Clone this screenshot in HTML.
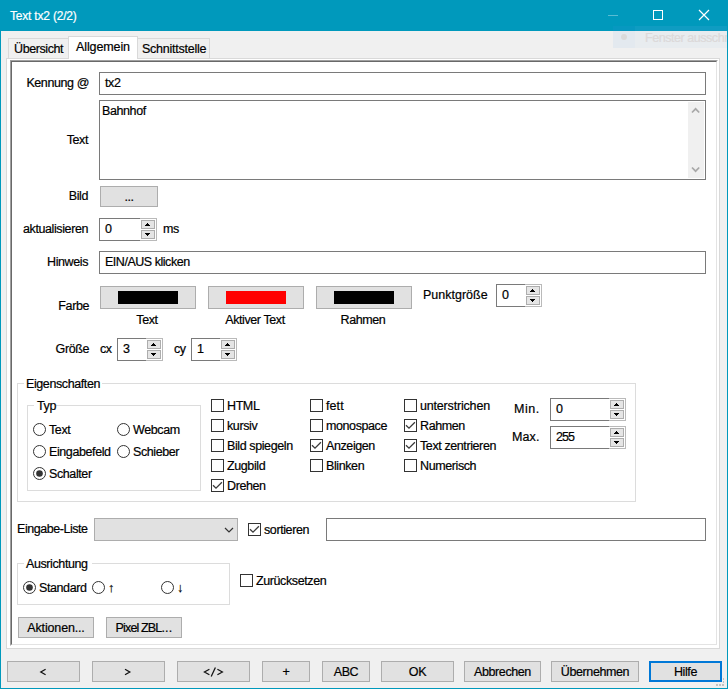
<!DOCTYPE html>
<html><head><meta charset="utf-8"><style>
html,body{margin:0;padding:0;}
body{width:728px;height:689px;position:relative;overflow:hidden;background:#f0f0f0;font-family:"Liberation Sans",sans-serif;}
.a{position:absolute;}
.t{position:absolute;white-space:nowrap;font-size:12.5px;line-height:12px;color:#000;letter-spacing:-0.4px;-webkit-text-stroke:0.2px currentColor;}
svg.a{display:block;}
</style></head><body>
<div class="a" style="left:0px;top:0px;width:728px;height:31px;background:#0099bc;"></div>
<div class="a" style="left:0px;top:0px;width:1px;height:689px;background:#0099bc;"></div>
<div class="a" style="left:727px;top:0px;width:1px;height:689px;background:#0099bc;"></div>
<div class="a" style="left:0px;top:688px;width:728px;height:1px;background:#0099bc;"></div>
<div class="t" style="left:10px;top:10px;color:#fff;font-size:12px;letter-spacing:-0.2px">Text tx2 (2/2)</div>
<div class="a" style="left:608px;top:15px;width:10px;height:1px;background:rgba(255,255,255,0.35);"></div>
<div class="a" style="left:653px;top:10px;width:10px;height:10px;box-sizing:border-box;border:1px solid #fff;"></div>
<svg class="a" style="left:698px;top:9px" width="13" height="13"><path d="M1 1L11 11M11 1L1 11" stroke="#fff" stroke-width="1.2"/></svg>
<div class="a" style="left:8px;top:38px;width:61px;height:21px;box-sizing:border-box;border:1px solid #d9d9d9;background:#f0f0f0;"></div>
<div class="a" style="left:137px;top:38px;width:73px;height:21px;box-sizing:border-box;border:1px solid #d9d9d9;background:#f0f0f0;"></div>
<div class="a" style="left:6px;top:58px;width:714px;height:591px;box-sizing:border-box;border:1px solid #d9d9d9;background:#fff;"></div>
<div class="a" style="left:68px;top:36px;width:70px;height:23px;box-sizing:border-box;border:1px solid #d9d9d9;background:#fff;border-bottom:0"></div>
<div class="t" style="left:14px;top:43px;">Übersicht</div>
<div class="t" style="left:76px;top:41px;letter-spacing:-0.11px">Allgemein</div>
<div class="t" style="left:142px;top:43px;letter-spacing:-0.24px">Schnittstelle</div>
<div class="a" style="left:10px;top:60px;width:708px;height:586px;background:#fff;"></div>
<div class="a" style="left:10px;top:60px;width:708px;height:586px;box-sizing:border-box;border-top:1px solid #a0a0a0;border-left:1px solid #a0a0a0;border-right:1px solid #fff;border-bottom:1px solid #fff"></div>
<div class="a" style="left:11px;top:61px;width:706px;height:584px;box-sizing:border-box;border-top:1px solid #696969;border-left:1px solid #696969;border-right:1px solid #e3e3e3;border-bottom:1px solid #e3e3e3"></div>
<div class="t" style="right:639px;top:77px;">Kennung @</div>
<div class="a" style="left:99px;top:72px;width:607px;height:23px;box-sizing:border-box;border:1px solid #7a7a7a;background:#fff;"></div>
<div class="t" style="left:105px;top:77px;">tx2</div>
<div class="a" style="left:99px;top:100px;width:607px;height:80px;box-sizing:border-box;border:1px solid #7a7a7a;background:#fff;"></div>
<div class="a" style="left:688px;top:102px;width:16px;height:76px;background:#f0f0f0;"></div>
<svg class="a" style="left:688px;top:102px" width="16" height="76"><path d="M4 10.5L7.6 6.8L11.2 10.5M4 65.5L7.6 69.2L11.2 65.5" stroke="#a8a8a8" stroke-width="1.7" fill="none"/></svg>
<div class="t" style="left:102px;top:105px;">Bahnhof</div>
<div class="t" style="right:640px;top:134px;">Text</div>
<div class="t" style="right:640px;top:190px;">Bild</div>
<div class="a" style="left:100px;top:186px;width:58px;height:21px;box-sizing:border-box;border:1px solid #adadad;background:#e1e1e1;"></div>
<div class="t" style="left:100px;width:58px;text-align:center;top:191px;">...</div>
<div class="t" style="right:640px;top:223px;">aktualisieren</div>
<div class="a" style="left:99px;top:218px;width:41px;height:23px;box-sizing:border-box;border:1px solid #7a7a7a;border-right:0;background:#fff"></div>
<div class="a" style="left:140px;top:218px;width:17px;height:23px;box-sizing:border-box;border:1px solid #bababa;border-left:0;background:#fff"></div>
<div class="a" style="left:141px;top:220px;width:14px;height:9px;box-sizing:border-box;border:1px solid #adadad;background:#e5e5e5;"></div>
<div class="a" style="left:141px;top:230px;width:14px;height:9px;box-sizing:border-box;border:1px solid #adadad;background:#e5e5e5;"></div>
<svg class="a" style="left:141px;top:220px" width="14" height="9" shape-rendering="crispEdges"><path d="M6 3h1v1h1v1h1v1h-5v-1h1v-1h1z" fill="#000"/></svg>
<svg class="a" style="left:141px;top:230px" width="14" height="9" shape-rendering="crispEdges"><path d="M4 3h5v1h-1v1h-1v1h-1v-1h-1v-1h-1z" fill="#000"/></svg>
<div class="t" style="left:105px;top:223px;letter-spacing:-1px">0</div>
<div class="t" style="left:163px;top:223px;">ms</div>
<div class="t" style="right:640px;top:256px;">Hinweis</div>
<div class="a" style="left:99px;top:251px;width:607px;height:23px;box-sizing:border-box;border:1px solid #7a7a7a;background:#fff;"></div>
<div class="t" style="left:105px;top:256px;"><span style='letter-spacing:-0.47px'>EIN/AUS klicken</span></div>
<div class="t" style="right:639px;top:300px;">Farbe</div>
<div class="a" style="left:100px;top:286px;width:96px;height:23px;box-sizing:border-box;border:1px solid #adadad;background:#e1e1e1;"></div>
<div class="a" style="left:118px;top:291px;width:60px;height:13px;background:#000;"></div>
<div class="t" style="left:99px;width:96px;text-align:center;top:314px;">Text</div>
<div class="a" style="left:208px;top:286px;width:96px;height:23px;box-sizing:border-box;border:1px solid #adadad;background:#e1e1e1;"></div>
<div class="a" style="left:226px;top:291px;width:60px;height:13px;background:#f00;"></div>
<div class="t" style="left:207px;width:96px;text-align:center;top:314px;">Aktiver Text</div>
<div class="a" style="left:316px;top:286px;width:96px;height:23px;box-sizing:border-box;border:1px solid #adadad;background:#e1e1e1;"></div>
<div class="a" style="left:334px;top:291px;width:60px;height:13px;background:#000;"></div>
<div class="t" style="left:315px;width:96px;text-align:center;top:314px;">Rahmen</div>
<div class="t" style="left:423px;top:289px;letter-spacing:0px">Punktgröße</div>
<div class="a" style="left:496px;top:284px;width:29px;height:23px;box-sizing:border-box;border:1px solid #7a7a7a;border-right:0;background:#fff"></div>
<div class="a" style="left:525px;top:284px;width:17px;height:23px;box-sizing:border-box;border:1px solid #bababa;border-left:0;background:#fff"></div>
<div class="a" style="left:526px;top:286px;width:14px;height:9px;box-sizing:border-box;border:1px solid #adadad;background:#e5e5e5;"></div>
<div class="a" style="left:526px;top:296px;width:14px;height:9px;box-sizing:border-box;border:1px solid #adadad;background:#e5e5e5;"></div>
<svg class="a" style="left:526px;top:286px" width="14" height="9" shape-rendering="crispEdges"><path d="M6 3h1v1h1v1h1v1h-5v-1h1v-1h1z" fill="#000"/></svg>
<svg class="a" style="left:526px;top:296px" width="14" height="9" shape-rendering="crispEdges"><path d="M4 3h5v1h-1v1h-1v1h-1v-1h-1v-1h-1z" fill="#000"/></svg>
<div class="t" style="left:502px;top:289px;letter-spacing:-1px">0</div>
<div class="t" style="right:639px;top:343px;">Größe</div>
<div class="t" style="left:100px;top:343px;">cx</div>
<div class="a" style="left:117px;top:338px;width:29px;height:23px;box-sizing:border-box;border:1px solid #7a7a7a;border-right:0;background:#fff"></div>
<div class="a" style="left:146px;top:338px;width:17px;height:23px;box-sizing:border-box;border:1px solid #bababa;border-left:0;background:#fff"></div>
<div class="a" style="left:147px;top:340px;width:14px;height:9px;box-sizing:border-box;border:1px solid #adadad;background:#e5e5e5;"></div>
<div class="a" style="left:147px;top:350px;width:14px;height:9px;box-sizing:border-box;border:1px solid #adadad;background:#e5e5e5;"></div>
<svg class="a" style="left:147px;top:340px" width="14" height="9" shape-rendering="crispEdges"><path d="M6 3h1v1h1v1h1v1h-5v-1h1v-1h1z" fill="#000"/></svg>
<svg class="a" style="left:147px;top:350px" width="14" height="9" shape-rendering="crispEdges"><path d="M4 3h5v1h-1v1h-1v1h-1v-1h-1v-1h-1z" fill="#000"/></svg>
<div class="t" style="left:123px;top:343px;letter-spacing:-1px">3</div>
<div class="t" style="left:174px;top:343px;">cy</div>
<div class="a" style="left:191px;top:338px;width:29px;height:23px;box-sizing:border-box;border:1px solid #7a7a7a;border-right:0;background:#fff"></div>
<div class="a" style="left:220px;top:338px;width:17px;height:23px;box-sizing:border-box;border:1px solid #bababa;border-left:0;background:#fff"></div>
<div class="a" style="left:221px;top:340px;width:14px;height:9px;box-sizing:border-box;border:1px solid #adadad;background:#e5e5e5;"></div>
<div class="a" style="left:221px;top:350px;width:14px;height:9px;box-sizing:border-box;border:1px solid #adadad;background:#e5e5e5;"></div>
<svg class="a" style="left:221px;top:340px" width="14" height="9" shape-rendering="crispEdges"><path d="M6 3h1v1h1v1h1v1h-5v-1h1v-1h1z" fill="#000"/></svg>
<svg class="a" style="left:221px;top:350px" width="14" height="9" shape-rendering="crispEdges"><path d="M4 3h5v1h-1v1h-1v1h-1v-1h-1v-1h-1z" fill="#000"/></svg>
<div class="t" style="left:197px;top:343px;letter-spacing:-1px">1</div>
<div class="a" style="left:17px;top:383px;width:619px;height:119px;box-sizing:border-box;border:1px solid #dcdcdc"></div>
<div class="a" style="left:24px;top:377px;width:78px;height:12px;background:#fff"></div>
<div class="t" style="left:26px;top:378px;">Eigenschaften</div>
<div class="a" style="left:27px;top:405px;width:174px;height:86px;box-sizing:border-box;border:1px solid #dcdcdc"></div>
<div class="a" style="left:34px;top:399px;width:22px;height:12px;background:#fff"></div>
<div class="t" style="left:37px;top:400px;">Typ</div>
<svg class="a" style="left:33px;top:423px" width="13" height="13"><circle cx="6.5" cy="6.5" r="6" stroke="#333" stroke-width="1" fill="#fff"/></svg>
<div class="t" style="left:49px;top:424px;">Text</div>
<svg class="a" style="left:117px;top:423px" width="13" height="13"><circle cx="6.5" cy="6.5" r="6" stroke="#333" stroke-width="1" fill="#fff"/></svg>
<div class="t" style="left:133px;top:424px;">Webcam</div>
<svg class="a" style="left:33px;top:445px" width="13" height="13"><circle cx="6.5" cy="6.5" r="6" stroke="#333" stroke-width="1" fill="#fff"/></svg>
<div class="t" style="left:49px;top:446px;">Eingabefeld</div>
<svg class="a" style="left:117px;top:445px" width="13" height="13"><circle cx="6.5" cy="6.5" r="6" stroke="#333" stroke-width="1" fill="#fff"/></svg>
<div class="t" style="left:133px;top:446px;">Schieber</div>
<svg class="a" style="left:33px;top:467px" width="13" height="13"><circle cx="6.5" cy="6.5" r="6" stroke="#333" stroke-width="1" fill="#fff"/><circle cx="6.5" cy="6.5" r="3.3" fill="#333"/></svg>
<div class="t" style="left:49px;top:468px;">Schalter</div>
<div class="a" style="left:211px;top:399px;width:13px;height:13px;box-sizing:border-box;border:1px solid #333;background:#fff;"></div>
<div class="t" style="left:227px;top:400px;">HTML</div>
<div class="a" style="left:211px;top:419px;width:13px;height:13px;box-sizing:border-box;border:1px solid #333;background:#fff;"></div>
<div class="t" style="left:227px;top:420px;">kursiv</div>
<div class="a" style="left:211px;top:439px;width:13px;height:13px;box-sizing:border-box;border:1px solid #333;background:#fff;"></div>
<div class="t" style="left:227px;top:440px;">Bild spiegeln</div>
<div class="a" style="left:211px;top:459px;width:13px;height:13px;box-sizing:border-box;border:1px solid #333;background:#fff;"></div>
<div class="t" style="left:227px;top:460px;">Zugbild</div>
<div class="a" style="left:211px;top:479px;width:13px;height:13px;box-sizing:border-box;border:1px solid #333;background:#fff;"></div>
<svg class="a" style="left:211px;top:479px" width="13" height="13"><path d="M2 6.2L5 9.2L10.9 3.3" stroke="#3a3a3a" stroke-width="1.3" fill="none"/></svg>
<div class="t" style="left:227px;top:480px;">Drehen</div>
<div class="a" style="left:310px;top:399px;width:13px;height:13px;box-sizing:border-box;border:1px solid #333;background:#fff;"></div>
<div class="t" style="left:326px;top:400px;"><span style='letter-spacing:0.1px'>fett</span></div>
<div class="a" style="left:310px;top:419px;width:13px;height:13px;box-sizing:border-box;border:1px solid #333;background:#fff;"></div>
<div class="t" style="left:326px;top:420px;">monospace</div>
<div class="a" style="left:310px;top:439px;width:13px;height:13px;box-sizing:border-box;border:1px solid #333;background:#fff;"></div>
<svg class="a" style="left:310px;top:439px" width="13" height="13"><path d="M2 6.2L5 9.2L10.9 3.3" stroke="#3a3a3a" stroke-width="1.3" fill="none"/></svg>
<div class="t" style="left:326px;top:440px;">Anzeigen</div>
<div class="a" style="left:310px;top:459px;width:13px;height:13px;box-sizing:border-box;border:1px solid #333;background:#fff;"></div>
<div class="t" style="left:326px;top:460px;">Blinken</div>
<div class="a" style="left:404px;top:399px;width:13px;height:13px;box-sizing:border-box;border:1px solid #333;background:#fff;"></div>
<div class="t" style="left:420px;top:400px;"><span style='letter-spacing:-0.18px'>unterstrichen</span></div>
<div class="a" style="left:404px;top:419px;width:13px;height:13px;box-sizing:border-box;border:1px solid #333;background:#fff;"></div>
<svg class="a" style="left:404px;top:419px" width="13" height="13"><path d="M2 6.2L5 9.2L10.9 3.3" stroke="#3a3a3a" stroke-width="1.3" fill="none"/></svg>
<div class="t" style="left:420px;top:420px;">Rahmen</div>
<div class="a" style="left:404px;top:439px;width:13px;height:13px;box-sizing:border-box;border:1px solid #333;background:#fff;"></div>
<svg class="a" style="left:404px;top:439px" width="13" height="13"><path d="M2 6.2L5 9.2L10.9 3.3" stroke="#3a3a3a" stroke-width="1.3" fill="none"/></svg>
<div class="t" style="left:420px;top:440px;">Text zentrieren</div>
<div class="a" style="left:404px;top:459px;width:13px;height:13px;box-sizing:border-box;border:1px solid #333;background:#fff;"></div>
<div class="t" style="left:420px;top:460px;">Numerisch</div>
<div class="t" style="left:514px;top:403px;letter-spacing:0.5px">Min.</div>
<div class="a" style="left:550px;top:398px;width:59px;height:23px;box-sizing:border-box;border:1px solid #7a7a7a;border-right:0;background:#fff"></div>
<div class="a" style="left:609px;top:398px;width:17px;height:23px;box-sizing:border-box;border:1px solid #bababa;border-left:0;background:#fff"></div>
<div class="a" style="left:610px;top:400px;width:14px;height:9px;box-sizing:border-box;border:1px solid #adadad;background:#e5e5e5;"></div>
<div class="a" style="left:610px;top:410px;width:14px;height:9px;box-sizing:border-box;border:1px solid #adadad;background:#e5e5e5;"></div>
<svg class="a" style="left:610px;top:400px" width="14" height="9" shape-rendering="crispEdges"><path d="M6 3h1v1h1v1h1v1h-5v-1h1v-1h1z" fill="#000"/></svg>
<svg class="a" style="left:610px;top:410px" width="14" height="9" shape-rendering="crispEdges"><path d="M4 3h5v1h-1v1h-1v1h-1v-1h-1v-1h-1z" fill="#000"/></svg>
<div class="t" style="left:556px;top:403px;letter-spacing:-1px">0</div>
<div class="t" style="left:512px;top:431px;letter-spacing:0.1px">Max.</div>
<div class="a" style="left:550px;top:426px;width:59px;height:23px;box-sizing:border-box;border:1px solid #7a7a7a;border-right:0;background:#fff"></div>
<div class="a" style="left:609px;top:426px;width:17px;height:23px;box-sizing:border-box;border:1px solid #bababa;border-left:0;background:#fff"></div>
<div class="a" style="left:610px;top:428px;width:14px;height:9px;box-sizing:border-box;border:1px solid #adadad;background:#e5e5e5;"></div>
<div class="a" style="left:610px;top:438px;width:14px;height:9px;box-sizing:border-box;border:1px solid #adadad;background:#e5e5e5;"></div>
<svg class="a" style="left:610px;top:428px" width="14" height="9" shape-rendering="crispEdges"><path d="M6 3h1v1h1v1h1v1h-5v-1h1v-1h1z" fill="#000"/></svg>
<svg class="a" style="left:610px;top:438px" width="14" height="9" shape-rendering="crispEdges"><path d="M4 3h5v1h-1v1h-1v1h-1v-1h-1v-1h-1z" fill="#000"/></svg>
<div class="t" style="left:556px;top:431px;letter-spacing:-1px">255</div>
<div class="t" style="left:17px;top:523px;letter-spacing:-0.45px">Eingabe-Liste</div>
<div class="a" style="left:94px;top:518px;width:144px;height:23px;box-sizing:border-box;border:1px solid #adadad;background:#e1e1e1;"></div>
<svg class="a" style="left:220px;top:522px" width="16" height="14"><path d="M5 6L9 10L13 6" stroke="#333" stroke-width="1.2" fill="none"/></svg>
<div class="a" style="left:248px;top:523px;width:13px;height:13px;box-sizing:border-box;border:1px solid #333;background:#fff;"></div>
<svg class="a" style="left:248px;top:523px" width="13" height="13"><path d="M2 6.2L5 9.2L10.9 3.3" stroke="#3a3a3a" stroke-width="1.3" fill="none"/></svg>
<div class="t" style="left:264px;top:524px;">sortieren</div>
<div class="a" style="left:326px;top:518px;width:380px;height:23px;box-sizing:border-box;border:1px solid #7a7a7a;background:#fff;"></div>
<div class="a" style="left:17px;top:563px;width:213px;height:42px;box-sizing:border-box;border:1px solid #dcdcdc"></div>
<div class="a" style="left:24px;top:557px;width:68px;height:12px;background:#fff"></div>
<div class="t" style="left:26px;top:558px;">Ausrichtung</div>
<svg class="a" style="left:23px;top:581px" width="13" height="13"><circle cx="6.5" cy="6.5" r="6" stroke="#333" stroke-width="1" fill="#fff"/><circle cx="6.5" cy="6.5" r="3.3" fill="#333"/></svg>
<div class="t" style="left:39px;top:582px;">Standard</div>
<svg class="a" style="left:92px;top:581px" width="13" height="13"><circle cx="6.5" cy="6.5" r="6" stroke="#333" stroke-width="1" fill="#fff"/></svg>
<div class="t" style="left:108px;top:582px;">↑</div>
<svg class="a" style="left:161px;top:581px" width="13" height="13"><circle cx="6.5" cy="6.5" r="6" stroke="#333" stroke-width="1" fill="#fff"/></svg>
<div class="t" style="left:177px;top:582px;">↓</div>
<div class="a" style="left:240px;top:574px;width:13px;height:13px;box-sizing:border-box;border:1px solid #333;background:#fff;"></div>
<div class="t" style="left:256px;top:575px;">Zurücksetzen</div>
<div class="a" style="left:18px;top:617px;width:76px;height:21px;box-sizing:border-box;border:1px solid #adadad;background:#e1e1e1;"></div>
<div class="t" style="left:18px;width:76px;text-align:center;top:622px;letter-spacing:-0.16px">Aktionen...</div>
<div class="a" style="left:106px;top:617px;width:76px;height:21px;box-sizing:border-box;border:1px solid #adadad;background:#e1e1e1;"></div>
<div class="t" style="left:106px;width:76px;text-align:center;top:622px;"><span style='letter-spacing:-0.85px'>Pixel ZBL</span><span style='letter-spacing:0.2px'>...</span></div>
<div class="a" style="left:7px;top:661px;width:73px;height:21px;box-sizing:border-box;border:1px solid #adadad;background:#e1e1e1;"></div>
<div class="t" style="left:7px;width:73px;text-align:center;top:666px;"></div>
<div class="a" style="left:92px;top:661px;width:73px;height:21px;box-sizing:border-box;border:1px solid #adadad;background:#e1e1e1;"></div>
<div class="t" style="left:92px;width:73px;text-align:center;top:666px;"></div>
<div class="a" style="left:177px;top:661px;width:73px;height:21px;box-sizing:border-box;border:1px solid #adadad;background:#e1e1e1;"></div>
<div class="t" style="left:177px;width:73px;text-align:center;top:666px;"></div>
<div class="a" style="left:262px;top:661px;width:48px;height:21px;box-sizing:border-box;border:1px solid #adadad;background:#e1e1e1;"></div>
<div class="t" style="left:262px;width:48px;text-align:center;top:666px;">+</div>
<div class="a" style="left:322px;top:661px;width:48px;height:21px;box-sizing:border-box;border:1px solid #adadad;background:#e1e1e1;"></div>
<div class="t" style="left:322px;width:48px;text-align:center;top:666px;">ABC</div>
<div class="a" style="left:381px;top:661px;width:73px;height:21px;box-sizing:border-box;border:1px solid #adadad;background:#e1e1e1;"></div>
<div class="t" style="left:381px;width:73px;text-align:center;top:666px;">OK</div>
<div class="a" style="left:464px;top:661px;width:77px;height:21px;box-sizing:border-box;border:1px solid #adadad;background:#e1e1e1;"></div>
<div class="t" style="left:464px;width:77px;text-align:center;top:666px;">Abbrechen</div>
<div class="a" style="left:551px;top:661px;width:88px;height:21px;box-sizing:border-box;border:1px solid #adadad;background:#e1e1e1;"></div>
<div class="t" style="left:551px;width:88px;text-align:center;top:666px;">Übernehmen</div>
<svg class="a" style="left:0;top:660px" width="260" height="22"><g stroke="#111" stroke-width="1.25" fill="none"><path d="M45.6 9.3L40.8 12L45.6 14.7"/><path d="M125 9.3L129.8 12L125 14.7"/><path d="M209.4 9.2L204.4 12L209.4 14.8"/><path d="M211.2 16.6L215.4 7.4"/><path d="M217.4 9.2L222.4 12L217.4 14.8"/></g></svg>
<div class="a" style="left:649px;top:661px;width:73px;height:21px;box-sizing:border-box;border:2px solid #0078d7;background:#e1e1e1"></div>
<div class="t" style="left:649px;width:73px;text-align:center;top:666px;">Hilfe</div>
<div class="a" style="left:716px;top:684px;width:2px;height:2px;background:#c2c2c2"></div>
<div class="a" style="left:719px;top:684px;width:2px;height:2px;background:#c2c2c2"></div>
<div class="a" style="left:722px;top:684px;width:2px;height:2px;background:#c2c2c2"></div>
<div class="a" style="left:723px;top:678px;width:1px;height:2px;background:#c2c2c2"></div>
<div class="a" style="left:723px;top:681px;width:1px;height:2px;background:#c2c2c2"></div>
<div class="a" style="left:613px;top:26px;width:22px;height:5px;background:#0798c0;"></div>
<div class="a" style="left:635px;top:26px;width:92px;height:5px;background:#0f9cc2;"></div>
<div class="a" style="left:613px;top:31px;width:22px;height:17px;background:#e3e9ef;"></div>
<div class="a" style="left:635px;top:31px;width:92px;height:17px;background:#e8ecef;"></div>
<div class="a" style="left:621px;top:34px;width:6px;height:6px;border-radius:50%;background:#dadada"></div>
<div class="a" style="left:645px;top:27px;width:82px;height:20px;overflow:hidden"><div class="t" style="left:0;top:5px;color:#dcd9d9;font-size:12.5px;letter-spacing:-0.45px">Fenster ausschneiden</div></div>
</body></html>
